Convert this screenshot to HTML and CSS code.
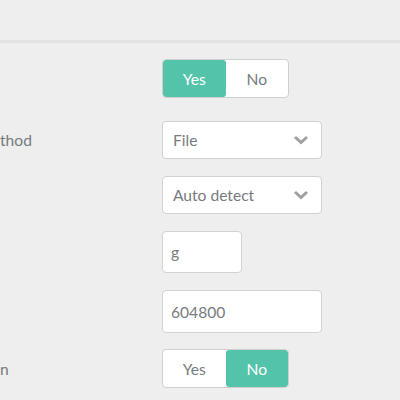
FILE: index.html
```html
<!DOCTYPE html>
<html>
<head>
<meta charset="utf-8">
<link rel="stylesheet" href="styles.css">
</head>
<body>
<div class="header"></div>
<div class="form">
  <div class="row r1">
    <div class="label"></div>
    <div class="toggle"><span class="opt on">Yes</span><span class="opt">No</span></div>
  </div>
  <div class="row r2">
    <div class="label">thod</div>
    <div class="select"><span>File</span>
      <svg class="chev" width="16" height="10" viewBox="0 0 16 10"><path d="M2 2 L8 7.5 L14 2" fill="none" stroke="#a0a0a0" stroke-width="3"/></svg>
    </div>
  </div>
  <div class="row">
    <div class="label"></div>
    <div class="select"><span>Auto detect</span>
      <svg class="chev" width="16" height="10" viewBox="0 0 16 10"><path d="M2 2 L8 7.5 L14 2" fill="none" stroke="#a0a0a0" stroke-width="3"/></svg>
    </div>
  </div>
  <div class="row">
    <div class="label"></div>
    <div class="input short">g</div>
  </div>
  <div class="row">
    <div class="label"></div>
    <div class="input wide">604800</div>
  </div>
  <div class="row r6">
    <div class="label">n</div>
    <div class="toggle"><span class="opt">Yes</span><span class="opt on">No</span></div>
  </div>
</div>
</body>
</html>
```
FILE: styles.css
```css
html, body {
  margin: 0;
  padding: 0;
  background: #eeeeee;
  font-family: Lato, "Liberation Sans", sans-serif;
  font-size: 15.6px;
  color: #777a7e;
  overflow: hidden;
}
.header {
  height: 40px;
  border-bottom: 3px solid #e2e2e2;
  background: #eeeeee;
}
.form {
  display: flex;
  flex-direction: column;
  gap: 17px;
  padding-top: 16px;
}
.row {
  display: flex;
  align-items: center;
}
.r2 {
  margin-top: 6px;
}
.r6 {
  margin-top: -1px;
}
.label {
  width: 162px;
  flex: none;
  color: #777a7e;
}
.toggle {
  display: flex;
  width: 125px;
  height: 37px;
  border: 1px solid #cfcfcf;
  border-radius: 4px;
  background: #fff;
  overflow: hidden;
}
.opt {
  flex: 1;
  display: flex;
  align-items: center;
  justify-content: center;
  color: #777a7e;
}
.opt.on {
  background: #53c4a9;
  color: #ffffff;
  border-radius: 3px;
}
.select {
  box-sizing: border-box;
  width: 160px;
  height: 38px;
  border: 1px solid #d2d2d2;
  border-radius: 4px;
  background: #fff;
  display: flex;
  align-items: center;
  justify-content: space-between;
  padding: 0 12px 0 10px;
}
.chev {
  display: block;
}
.input {
  box-sizing: border-box;
  border: 1px solid #d2d2d2;
  border-radius: 4px;
  background: #fff;
  display: flex;
  align-items: center;
  padding: 0 8px;
}
.input.short {
  width: 80px;
  height: 42px;
}
.input.wide {
  width: 160px;
  height: 43px;
}
```
